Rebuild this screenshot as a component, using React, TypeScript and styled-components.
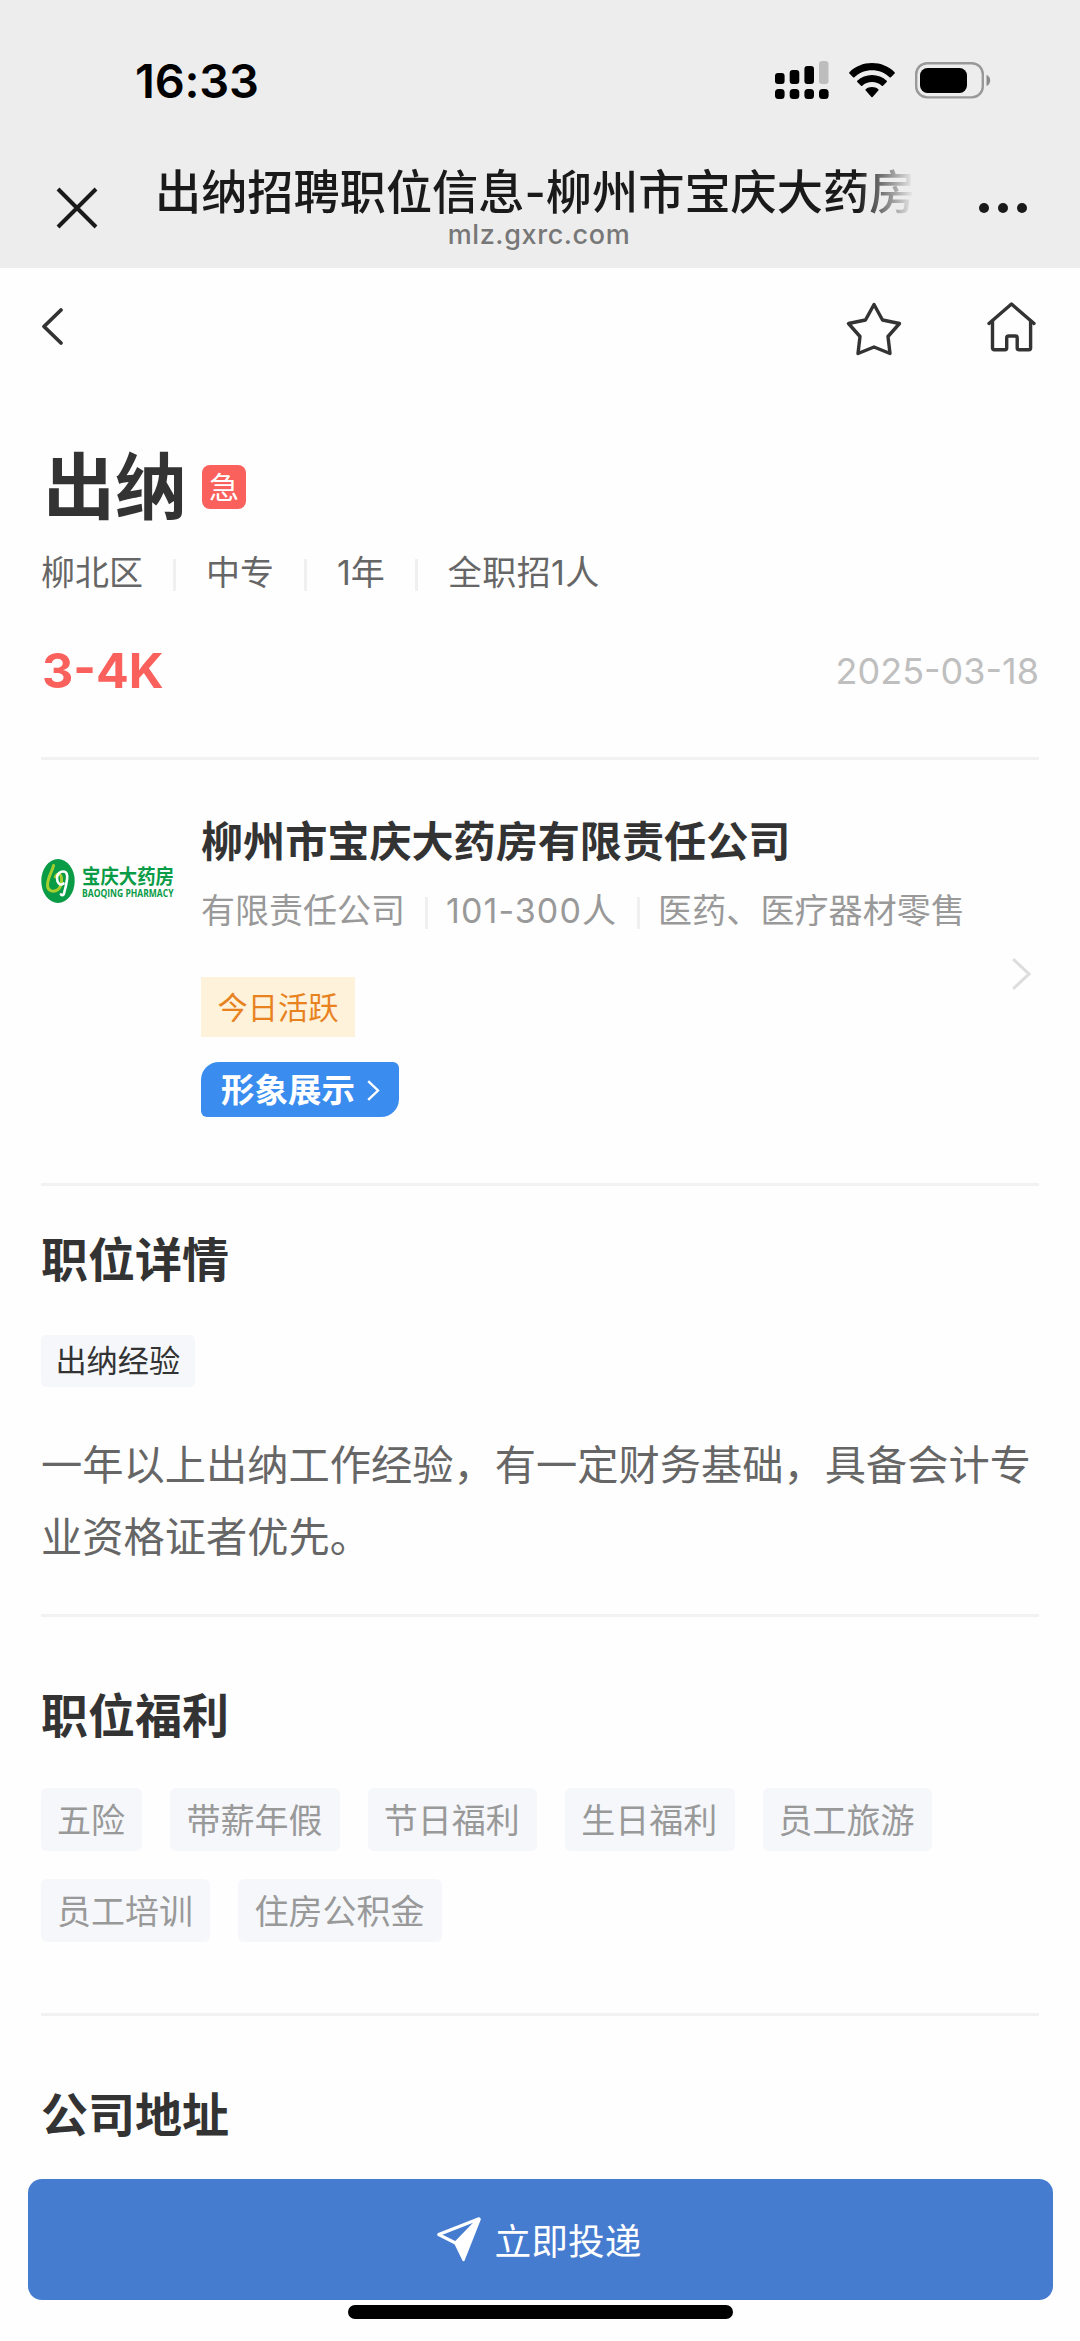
import React from "react";
import styled, { createGlobalStyle, css } from "styled-components";

const GlobalStyle = createGlobalStyle`
  * { box-sizing: border-box; }
  html, body { margin: 0; padding: 0; }
  body {
    background: #fefefe;
    font-family: Inter, "Noto Sans CJK SC", sans-serif;
    color: #333;
  }
  h1, h2, p { margin: 0; }
  svg { display: block; flex: none; }
`;

const Screen = styled.div`
  width: 1080px;
  height: 2341px;
  display: flex;
  flex-direction: column;
  overflow: hidden;
  background: #fefefe;
`;

const TopArea = styled.header`
  height: 268px;
  flex: none;
  background: #ededed;
`;

const StatusBar = styled.div`
  height: 160px;
  padding: 0 89px 0 135px;
  display: flex;
  align-items: center;
  justify-content: space-between;
`;

const Clock = styled.span`
  padding-top: 1px;
  font-size: 47px;
  font-weight: 600;
  line-height: 60px;
  color: #000;
  letter-spacing: -0.2px;
`;

const StatusIcons = styled.div`
  display: flex;
  align-items: center;
  gap: 20px;
`;

const BrowserBar = styled.div`
  height: 108px;
  display: flex;
  align-items: flex-start;
`;

const BarButton = styled.button<{ $width: number; $pad: string }>`
  width: ${(p) => p.$width}px;
  padding: ${(p) => p.$pad};
  border: 0;
  background: none;
`;

const TitleBlock = styled.div`
  width: 760px;
  display: flex;
  flex-direction: column;
  align-items: center;
`;

const PageTitle = styled.div`
  width: 760px;
  height: 62px;
  padding: 2px 0 0 1px;
  line-height: 60px;
  font-size: 46.2px;
  font-weight: 500;
  color: #1a1a1a;
  white-space: nowrap;
  overflow: hidden;
  -webkit-mask-image: linear-gradient(to right, #000 704px, transparent 760px);
  mask-image: linear-gradient(to right, #000 704px, transparent 760px);
`;

const PageHost = styled.div`
  margin-top: -4px;
  padding-left: 10px;
  font-size: 27px;
  line-height: 34px;
  font-weight: 500;
  letter-spacing: 0.6px;
  color: #777;
`;

const NavRow = styled.nav`
  height: 122px;
  padding: 0 44px 2px 41px;
  display: flex;
  align-items: center;
  justify-content: space-between;
`;

const BackLink = styled.span`
  padding-bottom: 4px;
`;

const NavActions = styled.div`
  display: flex;
  align-items: center;
  gap: 85px;
`;

const Content = styled.main`
  flex: 1;
  min-height: 0;
  padding: 0 41px;
`;

const Section = styled.section<{ $height: number; $last?: boolean }>`
  height: ${(p) => p.$height}px;
  ${(p) => !p.$last && css`border-bottom: 3px solid #f2f2f2;`}
`;

const JobTitleRow = styled.div`
  padding: 45px 0 0 2px;
  display: flex;
  align-items: center;
  gap: 15px;
`;

const JobTitle = styled.h1`
  font-size: 72px;
  line-height: 104px;
  font-weight: 700;
  color: #333;
`;

const UrgentBadge = styled.span`
  width: 44px;
  height: 44px;
  border-radius: 8px;
  background: #fa605c;
  color: #fff;
  font-size: 30px;
  line-height: 44px;
  text-align: center;
`;

const InfoRow = styled.div<{ $color: string; $gap: number; $top: number }>`
  margin-top: ${(p) => p.$top}px;
  height: 48px;
  display: flex;
  align-items: center;
  gap: ${(p) => p.$gap}px;
  font-size: 34px;
  line-height: 48px;
  color: ${(p) => p.$color};
  white-space: nowrap;
`;

const Separator = styled.i<{ $tight?: boolean }>`
  width: 3px;
  height: 32px;
  margin: 4px ${(p) => (p.$tight ? -2 : 0)}px 0 0;
  background: #f0f0f0;
`;

const Fact = styled.span<{ $tracking: number }>`
  letter-spacing: ${(p) => p.$tracking}px;
`;

const SalaryRow = styled.div`
  margin-top: 42px;
  display: flex;
  align-items: center;
  justify-content: space-between;
`;

const Salary = styled.span`
  padding: 2px 0 0 1px;
  font-size: 48.5px;
  line-height: 60px;
  font-weight: 700;
  color: #fa605c;
`;

const PostDate = styled.span`
  padding-top: 1px;
  font-size: 36px;
  line-height: 60px;
  color: #bfbfbf;
`;

const CompanyCard = styled.div`
  height: 100%;
  display: flex;
  align-items: flex-start;
`;

const LogoBox = styled.div`
  width: 160px;
  padding-top: 97px;
`;

const CompanyInfo = styled.div`
  flex: 1;
  padding-top: 51px;
  display: flex;
  flex-direction: column;
  align-items: flex-start;
`;

const CompanyName = styled.h2`
  font-size: 42.1px;
  line-height: 62px;
  font-weight: 700;
  color: #333;
  white-space: nowrap;
`;

const ActiveTag = styled.span`
  margin-top: 42px;
  height: 60px;
  padding: 0 16.6px;
  background: #fff2da;
  color: #e8821e;
  font-size: 30.2px;
  line-height: 62px;
`;

const ShowcaseTag = styled.span`
  margin-top: 25px;
  width: 198px;
  height: 55px;
  padding: 2px 0 0 20px;
  display: flex;
  align-items: center;
  gap: 12px;
  border-radius: 18px 6px 18px 6px;
  background: #3a8def;
  color: #fff;
  font-size: 33.5px;
  line-height: 55px;
  font-weight: 700;
`;

const CardArrow = styled.div`
  width: 27px;
  padding-top: 198px;
`;

const SectionTitle = styled.h2<{ $top: number }>`
  padding-top: ${(p) => p.$top}px;
  font-size: 47px;
  line-height: 68px;
  font-weight: 700;
  color: #333;
`;

const SkillTag = styled.span`
  display: inline-block;
  margin-top: 41px;
  height: 52px;
  padding: 0 14.4px;
  border-radius: 5px;
  background: #f5f7fb;
  color: #333;
  font-size: 31.2px;
  line-height: 53px;
`;

const Description = styled.p`
  margin-top: 40px;
  width: 1000px;
  font-size: 41.25px;
  line-height: 71.5px;
  color: #666;
  font-family: "Noto Sans CJK SC", sans-serif;
`;

const BenefitList = styled.div`
  margin-top: 38px;
  display: flex;
  flex-wrap: wrap;
  gap: 28px;
`;

const Benefit = styled.span`
  height: 63px;
  padding: 0 17.4px 0 16px;
  border-radius: 6px;
  background: #f5f7fb;
  color: #999;
  font-size: 34px;
  line-height: 65px;
`;

const Footer = styled.footer`
  flex: none;
  height: 162px;
  padding: 0 27px;
  display: flex;
  flex-direction: column;
  align-items: center;
`;

const ApplyButton = styled.button`
  width: 1025px;
  height: 121px;
  padding: 0 3px 0 0;
  border: 0;
  border-radius: 14px;
  background: #467ccf;
  color: #fff;
  font-family: inherit;
  font-size: 36.7px;
  line-height: 54px;
  display: flex;
  align-items: center;
  justify-content: center;
  gap: 13px;
`;

const ApplyLabel = styled.span`
  padding-top: 4px;
`;

const HomeIndicator = styled.div`
  margin-top: 5px;
  width: 385px;
  height: 14px;
  border-radius: 7px;
  background: #000;
`;

const SignalIcon = () => (
  <svg width="54" height="38" viewBox="0 0 54 38">
    <rect x="0" y="12" width="9.600" height="11" rx="3" />
    <rect x="14.700" y="9" width="9.600" height="14" rx="3" />
    <rect x="29.400" y="5" width="9.600" height="18" rx="3" />
    <rect x="44" y="0" width="9.500" height="23" rx="3" fill="#bdbdbd" />
    {[0, 14.7, 29.4, 44].map((x) => (
      <rect key={x} x={x} y="28" width="9.600" height="10" rx="3.500" />
    ))}
  </svg>
);

const WifiIcon = () => (
  <svg width="46" height="35" viewBox="0 0 46 35">
    <path d="M23 0C31.7 0 39.8 3.3 45.6 9.2c.4.4.4.9 0 1.300l-3.700 3.800c-.4.4-.9.4-1.300 0C35.900 9.700 29.700 7.300 23 7.300S10.100 9.700 5.400 14.300c-.4.4-.9.4-1.300 0L.4 10.500c-.4-.4-.4-.9 0-1.300C6.200 3.300 14.300 0 23 0z" />
    <path d="M23 12c5.600 0 10.800 2.100 14.700 5.700.4.4.4.9 0 1.300l-3.700 3.700c-.4.4-.9.4-1.300 0-2.600-2.300-6-3.600-9.700-3.600s-7.100 1.300-9.700 3.600c-.4.4-.9.4-1.300 0L8.300 19c-.4-.4-.4-.9 0-1.300C12.200 14.100 17.400 12 23 12z" />
    <path d="M23 24c2.500 0 4.700.9 6.300 2.300.4.4.4.900 0 1.300l-5.700 6.400c-.4.4-.9.4-1.200 0l-5.700-6.400c-.4-.4-.4-.9 0-1.300C18.300 24.900 20.500 24 23 24z" />
  </svg>
);

const BatteryIcon = () => (
  <svg width="76" height="37" viewBox="0 0 76 37">
    <rect x="1.200" y="1.200" width="66.600" height="34.200" rx="11" fill="none" stroke="#999" strokeWidth="2.400" />
    <rect x="5" y="6" width="47" height="25" rx="7.500" />
    <path d="M71.500 12.800c2.300 1 3.700 3.200 3.700 5.600s-1.400 4.600-3.700 5.600z" fill="#8c8c8c" />
  </svg>
);

const CloseIcon = () => (
  <svg width="42" height="42" viewBox="0 0 42 42" stroke="#1a1a1a" strokeWidth="4">
    <path d="M2 2L40 40M40 2L2 40" />
  </svg>
);

const MoreIcon = () => (
  <svg width="50" height="12" viewBox="0 0 50 12" fill="#1a1a1a">
    <circle cx="6" cy="6" r="5" />
    <circle cx="25" cy="6" r="5" />
    <circle cx="44" cy="6" r="5" />
  </svg>
);

const BackIcon = () => (
  <svg width="23" height="39" viewBox="0 0 23 39" fill="none" stroke="#333" strokeWidth="3.800" strokeLinecap="round" strokeLinejoin="round">
    <path d="M20 3L3 19.500L20 36" />
  </svg>
);

const StarIcon = () => (
  <svg width="56" height="52" viewBox="0 0 56 52" overflow="visible" fill="none" stroke="#333" strokeWidth="3.400" strokeLinejoin="round">
    <path d="M28 2.500L36.500 18L53.500 21.500L42 34.500L44 51.500L28 45L12 51.500L14 34.500L2.500 21.500L19.500 18Z" />
  </svg>
);

const HomeIcon = () => (
  <svg width="49" height="52" viewBox="0 0 49 52" fill="none" stroke="#333" strokeWidth="3.400" strokeLinecap="round" strokeLinejoin="round">
    <path d="M2 21.500L24.500 2L47 21.500" />
    <path d="M5.500 19V46a1.700 1.700 0 0 0 1.700 1.700H18a1.700 1.700 0 0 0 1.700-1.700V36a2 2 0 0 1 2-2h6.500a2 2 0 0 1 2 2v10a1.700 1.700 0 0 0 1.700 1.700h10a1.700 1.700 0 0 0 1.700-1.700V19" />
  </svg>
);

const ChevronRight = ({ w, h, color, stroke }: { w: number; h: number; color: string; stroke: number }) => (
  <svg width={w} height={h} viewBox={`0 0 ${w} ${h}`} fill="none" stroke={color} strokeWidth={stroke}>
    <path d={`M1.200 1.200L${w - 2} ${h / 2}L1.200 ${h - 1.2}`} />
  </svg>
);

const PlaneIcon = () => (
  <svg width="46" height="47" viewBox="0 0 46 47" stroke="#fff" strokeLinejoin="round">
    <path d="M43 2.800L2.800 18.600L19.500 27Z" fill="none" strokeWidth="3.200" />
    <path d="M43.500 3.500L19.500 27.500L27.500 44Z" fill="#fff" strokeWidth="2.400" />
  </svg>
);

const BrandLogo = () => (
  <svg width="140" height="48" viewBox="0 0 140 48">
    <ellipse cx="17" cy="24" rx="16.700" ry="21.900" fill="#0a9b47" />
    <path d="M12.600 8.500C11 15 6.500 21 6.500 28c0 6.500 6.500 7.500 10.500 4.500 4.500-4 4.500-14 1.500-15.200-1.800-.5-3.300.7-4.200 2.500" fill="none" stroke="#a4cf2e" strokeWidth="3" strokeLinecap="round" />
    <path d="M22.500 26.500c-3.500 3-6.500-1-6.500-5.500 0-4 3-6.500 6.200-6.500 3.600 0 4.400 3.500 3.900 7.500-.6 5-1.800 10-3.300 15.200-.6 1.300-2 1.200-2.900.2" fill="none" stroke="#fff" strokeWidth="2.600" strokeLinecap="round" />
    <text transform="translate(41 26.500) scale(0.92 1)" fontFamily="'Noto Sans CJK SC', sans-serif" fontWeight="700" fontSize="20" fill="#0a9b47">宝庆大药房</text>
    <text transform="translate(41 40) scale(0.75 1)" fontFamily="'Open Sans', sans-serif" fontWeight="700" fontSize="11.400" fill="#0a9b47">BAOQING PHARMACY</text>
  </svg>
);

type FactItem = { text: string; tracking?: number };

const jobFacts: FactItem[] = [{ text: "柳北区" }, { text: "中专" }, { text: "1年" }, { text: "全职招1人", tracking: 0.4 }];
const companyFacts: FactItem[] = [
  { text: "有限责任公司" },
  { text: "101-300人", tracking: 1.1 },
  { text: "医药、医疗器材零售", tracking: 0.1 },
];
const benefits = ["五险", "带薪年假", "节日福利", "生日福利", "员工旅游", "员工培训", "住房公积金"];

const Facts = ({ items, tight }: { items: FactItem[]; tight?: boolean }) => (
  <>
    {items.map((item, i) => (
      <React.Fragment key={item.text}>
        {i > 0 && <Separator $tight={tight} />}
        <Fact $tracking={item.tracking ?? 0}>{item.text}</Fact>
      </React.Fragment>
    ))}
  </>
);

export default function App() {
  return (
    <>
      <GlobalStyle />
      <Screen>
        <TopArea>
          <StatusBar>
            <Clock>16:33</Clock>
            <StatusIcons>
              <SignalIcon />
              <WifiIcon />
              <BatteryIcon />
            </StatusIcons>
          </StatusBar>
          <BrowserBar>
            <BarButton $width={154} $pad="27px 0 0 56px"><CloseIcon /></BarButton>
            <TitleBlock>
              <PageTitle>出纳招聘职位信息-柳州市宝庆大药房</PageTitle>
              <PageHost>mlz.gxrc.com</PageHost>
            </TitleBlock>
            <BarButton $width={166} $pad="42px 0 0 64px"><MoreIcon /></BarButton>
          </BrowserBar>
        </TopArea>

        <NavRow>
          <BackLink><BackIcon /></BackLink>
          <NavActions>
            <StarIcon />
            <HomeIcon />
          </NavActions>
        </NavRow>

        <Content>
          <Section $height={370}>
            <JobTitleRow>
              <JobTitle>出纳</JobTitle>
              <UrgentBadge>急</UrgentBadge>
            </JobTitleRow>
            <InfoRow $color="#666" $gap={30} $top={10}>
              <Facts items={jobFacts} />
            </InfoRow>
            <SalaryRow>
              <Salary>3-4K</Salary>
              <PostDate>2025-03-18</PostDate>
            </SalaryRow>
          </Section>

          <Section $height={426}>
            <CompanyCard>
              <LogoBox><BrandLogo /></LogoBox>
              <CompanyInfo>
                <CompanyName>柳州市宝庆大药房有限责任公司</CompanyName>
                <InfoRow $color="#999" $gap={20} $top={14}>
                  <Facts items={companyFacts} tight />
                </InfoRow>
                <ActiveTag>今日活跃</ActiveTag>
                <ShowcaseTag>
                  形象展示
                  <ChevronRight w={13} h={21} color="#fff" stroke={2.4} />
                </ShowcaseTag>
              </CompanyInfo>
              <CardArrow><ChevronRight w={19} h={32} color="#ddd" stroke={3} /></CardArrow>
            </CompanyCard>
          </Section>

          <Section $height={431}>
            <SectionTitle $top={40}>职位详情</SectionTitle>
            <SkillTag>出纳经验</SkillTag>
            <Description>一年以上出纳工作经验，有一定财务基础，具备会计专业资格证者优先。</Description>
          </Section>

          <Section $height={399}>
            <SectionTitle $top={65}>职位福利</SectionTitle>
            <BenefitList>
              {benefits.map((b) => (
                <Benefit key={b}>{b}</Benefit>
              ))}
            </BenefitList>
          </Section>

          <Section $height={150} $last>
            <SectionTitle $top={65}>公司地址</SectionTitle>
          </Section>
        </Content>

        <Footer>
          <ApplyButton>
            <PlaneIcon />
            <ApplyLabel>立即投递</ApplyLabel>
          </ApplyButton>
          <HomeIndicator />
        </Footer>
      </Screen>
    </>
  );
}
